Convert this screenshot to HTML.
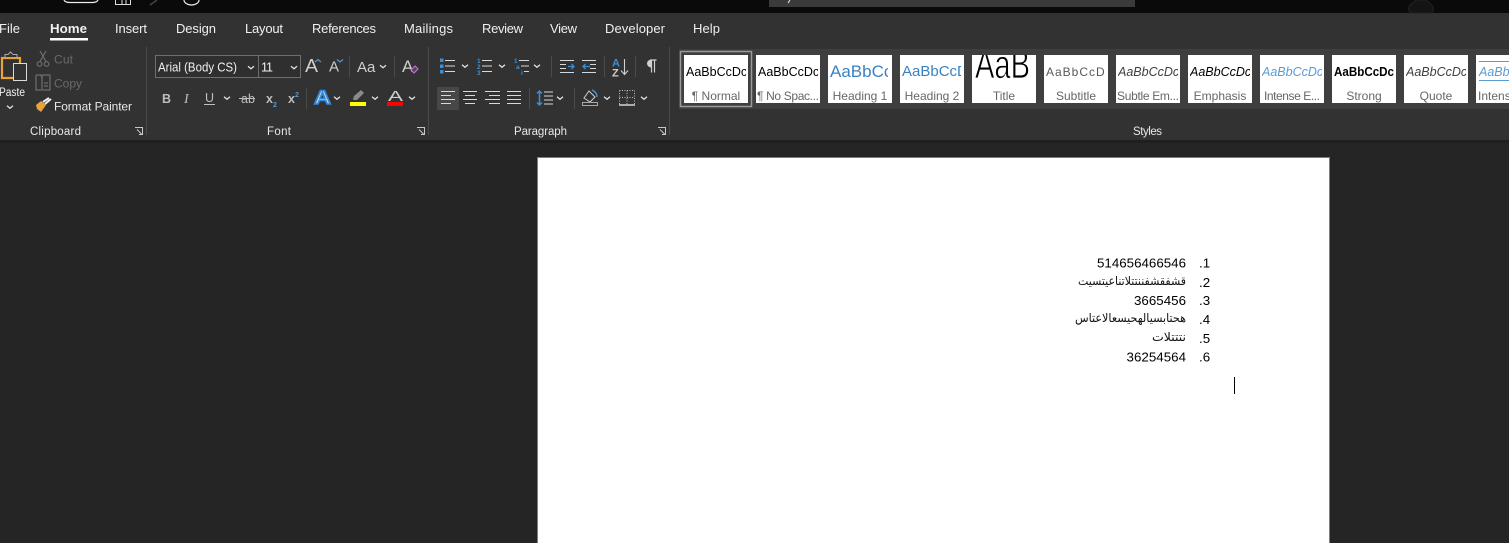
<!DOCTYPE html>
<html><head><meta charset="utf-8"><style>
html,body{margin:0;padding:0;background:#252525;overflow:hidden}
svg{display:block;font-family:"Liberation Sans","DejaVu Sans",sans-serif}
.t{fill:#f0f0f0;font-size:13px}
.s{fill:#e8e8e8;font-size:11.5px}
.l{fill:#666;font-size:12px;text-anchor:middle}
.g{fill:none;stroke:#dcdcdc;stroke-width:1}
.b{fill:#3a8fd8}
</style></head><body>
<svg width="1509" height="543" viewBox="0 0 1509 543" xmlns="http://www.w3.org/2000/svg">
<defs>
<path id="ch" d="M-3-1.300L0 1.300L3-1.300" fill="none" stroke="#e0e0e0" stroke-width="1.300"/>
<g id="lc" fill="none" stroke="#c8c8c8"><path d="M0 .5H7.500V7.500"/><path d="M2 2.500L7 7.500M4 7.500H7.500V4"/></g>
</defs>
<rect width="1509" height="543" fill="#252525"/>
<rect width="1509" height="13" fill="#0a0a0a"/>
<rect y="13" width="1509" height="127" fill="#323232"/>
<rect y="140" width="1509" height="3" fill="#1f1f1f"/>

<!-- title bar -->
<path d="M64 0Q65 2.500 70 2.500H92Q97 2.500 98 0" fill="none" stroke="#eee" stroke-width="1.200"/>
<path d="M115.500 0V4.500H130.500V0M122 0V4.500M126 0V4.500" fill="none" stroke="#ddd"/>
<path d="M150 5L157 0" stroke="#444" stroke-width="1.500"/>
<path d="M184 0A7.500 5 0 0 0 199 0" fill="none" stroke="#eee" stroke-width="1.200"/>
<rect x="769" width="366" height="7" fill="#3a3a3a"/>
<path d="M788 3L790 0" stroke="#eee"/>
<path d="M1410 13Q1407 8 1411 4Q1414 2 1416 0H1426Q1428 2 1431 4Q1435 8 1432 13Z" fill="#141414" stroke="#222"/>

<!-- tabs -->
<text class="t" x="-1" y="33">File</text>
<text class="t" x="50" y="33" font-weight="bold" textLength="37" lengthAdjust="spacingAndGlyphs">Home</text>
<rect x="50" y="38" width="38" height="2.500" fill="#fff"/>
<text class="t" x="115" y="33" textLength="32">Insert</text>
<text class="t" x="176" y="33" textLength="40">Design</text>
<text class="t" x="245" y="33" textLength="38">Layout</text>
<text class="t" x="312" y="33" textLength="64">References</text>
<text class="t" x="404" y="33" textLength="49">Mailings</text>
<text class="t" x="482" y="33" textLength="41">Review</text>
<text class="t" x="550" y="33" textLength="27">View</text>
<text class="t" x="605" y="33" textLength="60">Developer</text>
<text class="t" x="693" y="33" textLength="27">Help</text>

<!-- separators -->
<path d="M146.500 47V135M428.500 47V135M669.500 47V135" stroke="#4b4b4b"/>

<!-- clipboard -->
<rect x="2" y="58" width="18" height="20" fill="none" stroke="#e9a33a" stroke-width="2.200"/>
<path d="M5 57.500V54.500H8L10.500 52L13 54.500H17V57.500Z" fill="#323232" stroke="#a8a8a8"/>
<rect x="13.500" y="63.500" width="13" height="17" fill="#323232" stroke="#dcdcdc"/>
<text x="-1" y="96" font-size="11.500" fill="#f0f0f0" textLength="26" lengthAdjust="spacingAndGlyphs">Paste</text>
<use href="#ch" x="10" y="107"/>
<g fill="none" stroke="#6e6e6e" stroke-width="1.200">
<circle cx="39.500" cy="64" r="2.300"/><circle cx="46.500" cy="64" r="2.300"/>
<path d="M40 61.500L46 51M46 61.500L40 51"/>
<path d="M36 75V90H41M36 75H41L42 78V75M42 75L50 75L50 90H42V78M44 83H48M44 86H48"/>
</g>
<text x="54" y="63.500" font-size="12" fill="#6a6a6a" textLength="19">Cut</text>
<text x="54" y="87.500" font-size="12" fill="#6a6a6a" textLength="28">Copy</text>
<path d="M41 101L46 105L41 112L37 109L36 105Z" fill="#e9a33a"/>
<path d="M43 102L49 98M45 104L51 99" stroke="#eee" stroke-width="2"/>
<text x="54" y="110.500" font-size="12" fill="#e8e8e8" textLength="78">Format Painter</text>
<text class="s" x="30" y="135" textLength="51">Clipboard</text>
<use href="#lc" x="135" y="127"/>

<!-- font -->
<rect x="155.500" y="55.500" width="103" height="22" fill="#2f2f2f" stroke="#6e6e6e"/>
<rect x="258.500" y="55.500" width="42" height="22" fill="#2f2f2f" stroke="#6e6e6e"/>
<text class="t" x="158" y="71.500" font-size="12.500" textLength="79" lengthAdjust="spacingAndGlyphs" style="font-size:12.500px">Arial (Body CS)</text>
<text class="t" x="261" y="71.500" textLength="12" style="font-size:12.500px">11</text>
<use href="#ch" x="251" y="67.500"/><use href="#ch" x="294" y="67.500"/>
<text x="305" y="72" font-size="18" fill="#cfcfcf" textLength="13" lengthAdjust="spacingAndGlyphs">A</text>
<path d="M315 62L318 59.500L321 62" fill="none" stroke="#4a9ae0" stroke-width="1.200"/>
<text x="329" y="71.500" font-size="15" fill="#cfcfcf">A</text>
<path d="M337 59.500L340 62L343 59.500" fill="none" stroke="#4a9ae0" stroke-width="1.200"/>
<path d="M349.500 56V77M394.500 56V77" stroke="#4b4b4b"/>
<text x="357" y="72" font-size="15" fill="#cfcfcf">Aa</text>
<use href="#ch" x="383" y="66.500"/>
<text x="402" y="72" font-size="17" fill="#cfcfcf">A</text>
<path d="M411 70L415 66L418 69L414 73Z" fill="#5a3a62" stroke="#c57ad6"/>

<text x="162" y="103" font-size="12.500" font-weight="bold" fill="#bdbdbd">B</text>
<text x="184" y="103" font-size="14" font-style="italic" fill="#bdbdbd" font-family="Liberation Serif">I</text>
<text x="205" y="102" font-size="12.500" fill="#bdbdbd">U</text><path d="M204 104.500H215" stroke="#bdbdbd"/>
<use href="#ch" x="227" y="98"/>
<text x="241" y="103" font-size="12.500" fill="#bdbdbd">ab</text><path d="M239 98.500H255" stroke="#bdbdbd"/>
<text x="266" y="103" font-size="12.500" font-weight="bold" fill="#bdbdbd">x</text><text x="273" y="107" font-size="7" fill="#4a9ae0" font-weight="bold">2</text>
<text x="288" y="103" font-size="12.500" font-weight="bold" fill="#bdbdbd">x</text><text x="295" y="97" font-size="7" fill="#4a9ae0" font-weight="bold">2</text>
<path d="M306.500 88V109" stroke="#4b4b4b"/>
<text x="314" y="104" font-size="19" font-weight="bold" fill="#b9d3ea" stroke="#2f86d6" stroke-width="1.500" textLength="17" lengthAdjust="spacingAndGlyphs">A</text>
<use href="#ch" x="337" y="98"/>
<path d="M353 100L354 96L361 90L364 93L357 100Z" fill="#8a8a8a"/>
<rect x="350" y="102" width="16" height="4" fill="#ffff00"/>
<use href="#ch" x="375" y="98"/>
<text x="388" y="101" font-size="15" fill="#cfcfcf" textLength="15" lengthAdjust="spacingAndGlyphs">A</text>
<rect x="387" y="102" width="16" height="4" fill="#ff0000"/>
<use href="#ch" x="412" y="98"/>
<text class="s" x="267" y="135" textLength="24">Font</text>
<use href="#lc" x="417" y="127"/>

<!-- paragraph -->
<rect x="440" y="58.500" width="3.500" height="3.500" class="b"/><rect x="440" y="64.500" width="3.500" height="3.500" class="b"/><rect x="440" y="70" width="3.500" height="3.500" class="b"/>
<path d="M445 60.500H455M445 66H455M445 71.500H455" stroke="#d8d8d8"/>
<use href="#ch" x="465" y="66"/>
<text x="477" y="63" font-size="6.500" font-weight="bold" fill="#3a8fd8">1</text><text x="477" y="69" font-size="6.500" font-weight="bold" fill="#3a8fd8">2</text><text x="477" y="75" font-size="6.500" font-weight="bold" fill="#3a8fd8">3</text>
<path d="M482 60.500H492M482 66H492M482 71.500H492" stroke="#d8d8d8"/>
<use href="#ch" x="502" y="66"/>
<text x="514" y="63" font-size="6.500" font-weight="bold" fill="#3a8fd8">1</text><text x="516" y="69" font-size="6.500" font-weight="bold" fill="#3a8fd8">a</text><text x="521" y="75" font-size="6.500" font-weight="bold" fill="#3a8fd8">i</text>
<path d="M519 60.500H529M521 66H529M524 71.500H529" stroke="#d8d8d8"/>
<use href="#ch" x="537" y="66"/>
<path d="M551.500 56V77M604.500 56V77M635.500 56V77" stroke="#4b4b4b"/>
<path d="M560 60.500H574M560 64.500H566M560 68.500H566M560 72.500H574M582 60.500H596M590 64.500H596M590 68.500H596M582 72.500H596" stroke="#d8d8d8"/>
<path d="M568 66.500H574M571.500 64L574 66.500L571.500 69M590 66.500H583M585.500 64L583 66.500L585.500 69" fill="none" stroke="#3a8fd8" stroke-width="1.300"/>
<text x="612" y="66.500" font-size="11" font-weight="bold" fill="#3a8fd8">A</text>
<text x="612" y="76.500" font-size="11" font-weight="bold" fill="#cfcfcf">Z</text>
<path d="M624.500 59V74M621 70.500L624.500 74.500L628 70.500" fill="none" stroke="#cfcfcf" stroke-width="1.100"/>
<path d="M650 60H656.500M651.500 60V72.500M654.500 60V72.500" stroke="#d0d0d0" stroke-width="1.200" fill="none"/><path d="M651.500 60A4 3.500 0 0 0 651.500 67Z" fill="#d0d0d0" stroke="#d0d0d0"/>

<rect x="437" y="87" width="22" height="23" fill="#474747"/>
<g stroke="#d8d8d8">
<path d="M441 91.500H455M441 95.500H451M441 99.500H455M441 103.500H451"/>
<path d="M463 91.500H477M465 95.500H475M463 99.500H477M465 103.500H475"/>
<path d="M485 91.500H500M489 95.500H500M485 99.500H500M489 103.500H500"/>
<path d="M507 91.500H521M507 95.500H521M507 99.500H521M507 103.500H521"/>
<path d="M544 92H553M544 96H553M544 100H553M544 104H553"/>
</g>
<path d="M529.500 88V109M574.500 88V109" stroke="#4b4b4b"/>
<path d="M539.500 91V105M537 93.500L539.500 91L542 93.500M537 102.500L539.500 105L542 102.500" fill="none" stroke="#3a8fd8" stroke-width="1.500"/>
<use href="#ch" x="560" y="98"/>
<path d="M589 91L595 97L590 102L584 98Z" fill="none" stroke="#cfcfcf"/><path d="M592 90Q597 92 597 97" fill="none" stroke="#4a9ae0" stroke-width="1.300"/>
<rect x="582.500" y="102.500" width="15" height="3" fill="none" stroke="#a8a8a8"/>
<use href="#ch" x="607" y="98"/>
<path d="M619.500 90.500H634.500V104M619.500 90.500V104M627 90.500V104M619.500 97.500H634.500" fill="none" stroke="#bdbdbd" stroke-dasharray="1 1.500"/>
<path d="M619 105H635" stroke="#eee" stroke-width="1.300"/>
<use href="#ch" x="644" y="98"/>
<text class="s" x="514" y="135" textLength="53">Paragraph</text>
<use href="#lc" x="658" y="127"/>

<!-- styles gallery -->
<rect x="679" y="49" width="830" height="60" fill="#3f3f3f"/>
<rect x="680.500" y="51.500" width="71" height="55" fill="none" stroke="#9a9a9a" stroke-width="1.500"/>
<g fill="#fff">
<rect x="684" y="55" width="64" height="48"/><rect x="756" y="55" width="64" height="48"/><rect x="828" y="55" width="64" height="48"/><rect x="900" y="55" width="64" height="48"/><rect x="972" y="55" width="64" height="48"/><rect x="1044" y="55" width="64" height="48"/><rect x="1116" y="55" width="64" height="48"/><rect x="1188" y="55" width="64" height="48"/><rect x="1260" y="55" width="64" height="48"/><rect x="1332" y="55" width="64" height="48"/><rect x="1404" y="55" width="64" height="48"/><rect x="1476" y="55" width="33" height="48"/>
</g>
<svg x="686" y="55" width="60" height="48"><text y="21" font-size="12.500" fill="#000">AaBbCcDc</text></svg>
<svg x="758" y="55" width="60" height="48"><text y="21" font-size="12.500" fill="#000">AaBbCcDc</text></svg>
<svg x="830" y="55" width="58" height="48"><text y="22" font-size="17" fill="#3b82c4">AaBbCc</text></svg>
<svg x="902" y="55" width="59" height="48"><text y="21" font-size="15" fill="#3b82c4">AaBbCcD</text></svg>
<svg x="974" y="55" width="60" height="48"><text x="1" y="23" font-size="40" fill="#000" stroke="#fff" stroke-width=".8" textLength="55" lengthAdjust="spacingAndGlyphs">AaB</text></svg>
<svg x="1046" y="55" width="60" height="48"><text y="21" font-size="12" fill="#595959" letter-spacing="1">AaBbCcD</text></svg>
<svg x="1118" y="55" width="60" height="48"><text y="21" font-size="12.500" font-style="italic" fill="#404040">AaBbCcDc</text></svg>
<svg x="1190" y="55" width="60" height="48"><text y="21" font-size="12.500" font-style="italic" fill="#000">AaBbCcDc</text></svg>
<svg x="1262" y="55" width="60" height="48"><text y="21" font-size="12.500" font-style="italic" fill="#5b9bd5">AaBbCcDc</text></svg>
<svg x="1334" y="55" width="60" height="48"><text y="21" font-size="12.500" font-weight="bold" fill="#000" textLength="60" lengthAdjust="spacingAndGlyphs">AaBbCcDc</text></svg>
<svg x="1406" y="55" width="60" height="48"><text y="21" font-size="12.500" font-style="italic" fill="#404040">AaBbCcDc</text></svg>
<path d="M1479 61.500H1509M1479 80.500H1509" stroke="#5b9bd5"/>
<text x="1479" y="76" font-size="12.500" font-style="italic" fill="#5b9bd5">AaBb</text>
<text class="l" x="716" y="100">¶ Normal</text>
<text class="l" x="788" y="100" textLength="62">¶ No Spac...</text>
<text class="l" x="860" y="100">Heading 1</text>
<text class="l" x="932" y="100">Heading 2</text>
<text class="l" x="1004" y="100">Title</text>
<text class="l" x="1076" y="100">Subtitle</text>
<text class="l" x="1148" y="100" textLength="62">Subtle Em...</text>
<text class="l" x="1220" y="100">Emphasis</text>
<text class="l" x="1292" y="100" textLength="56">Intense E...</text>
<text class="l" x="1364" y="100">Strong</text>
<text class="l" x="1436" y="100">Quote</text>
<text x="1478" y="100" font-size="12" fill="#666">Intens</text>
<text class="s" x="1133" y="135" textLength="29">Styles</text>

<!-- page -->
<rect x="537.500" y="157.500" width="792" height="400" fill="#fff" stroke="#7d7d7d"/>
<g font-size="13.330" fill="#000">
<text x="1097" y="267.500" textLength="89">514656466546</text>
<text x="1134" y="305" textLength="52">3665456</text>
<text x="1126.500" y="361.500" textLength="59.500">36254564</text>
<text x="1199" y="267.500">.1</text><text x="1199" y="287">.2</text><text x="1199" y="305">.3</text><text x="1199" y="324">.4</text><text x="1199" y="343">.5</text><text x="1199" y="361.500">.6</text>
</g>
<g font-size="12" fill="#111" direction="rtl" font-family="'DejaVu Sans',sans-serif">
<text x="1186" y="285" textLength="108" lengthAdjust="spacingAndGlyphs">قشفقشفننتتلاتناعيتسيت</text>
<text x="1186" y="322" textLength="111" lengthAdjust="spacingAndGlyphs">هحتابسيالهحيسعالاعتاس</text>
<text x="1186" y="341" textLength="34" lengthAdjust="spacingAndGlyphs">نتتتلات</text>
</g>
<path d="M1234.500 377V394" stroke="#000"/>
</svg>
</body></html>
